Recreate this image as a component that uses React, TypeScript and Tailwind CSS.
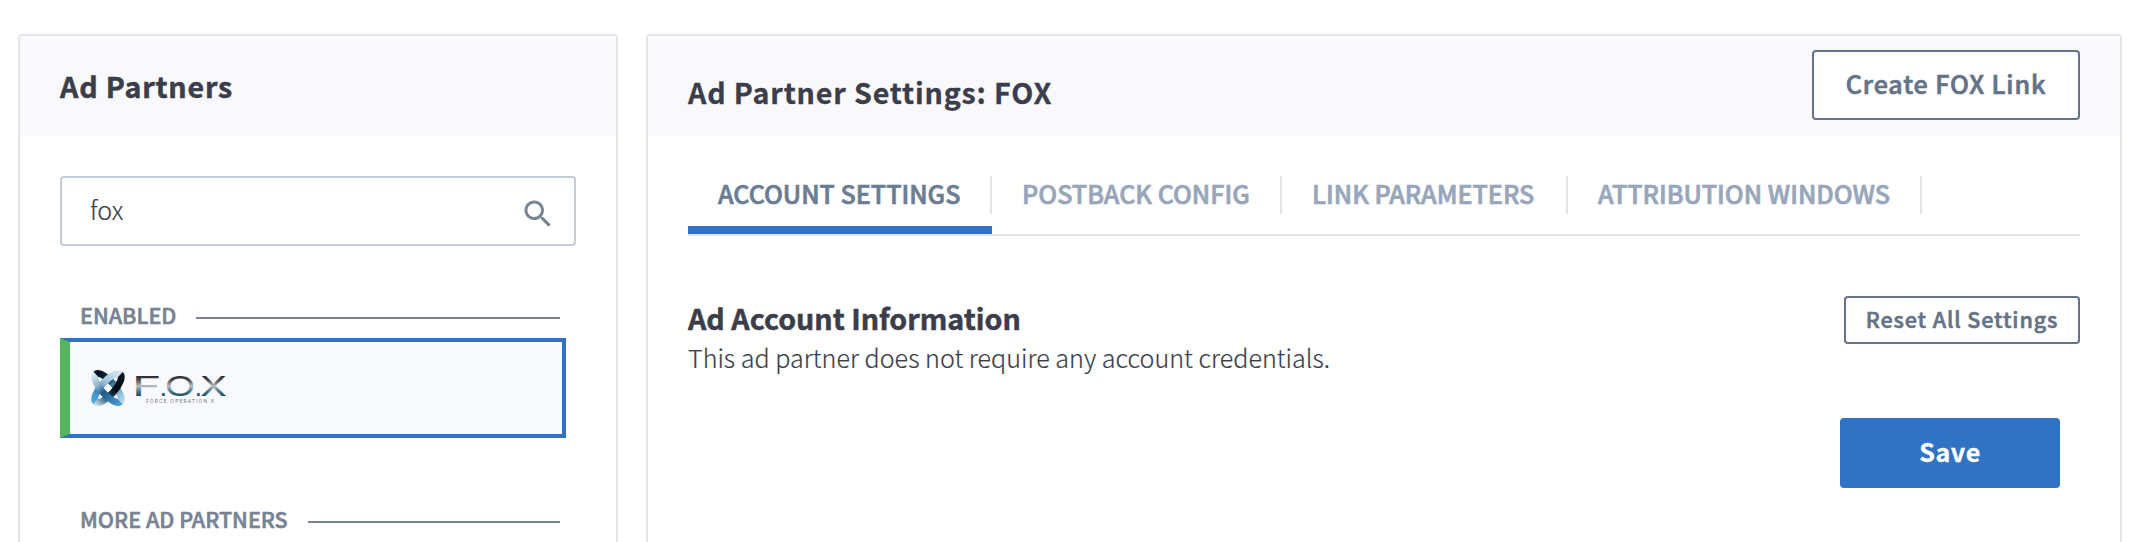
import type { ReactNode } from "react";

const tabs = [
  { label: "ACCOUNT SETTINGS", width: "w-[304px]", active: true },
  { label: "POSTBACK CONFIG", width: "w-[290px]", active: false },
  { label: "LINK PARAMETERS", width: "w-[286px]", active: false },
  { label: "ATTRIBUTION WINDOWS", width: "w-[354px]", active: false },
];

function SearchIcon() {
  return (
    <svg viewBox="0 0 24 24" className="mt-[18px] h-9 w-9 fill-[#778594]" aria-hidden="true">
      <path d="M15.5 14h-.79l-.28-.27C15.41 12.59 16 11.11 16 9.5 16 5.91 13.09 3 9.5 3S3 5.91 3 9.5 5.91 16 9.5 16c1.61 0 3.09-.59 4.23-1.57l.27.28v.79l5 4.99L20.49 19l-4.99-5zm-6 0C7.01 14 5 11.99 5 9.5S7.01 5 9.5 5 14 7.01 14 9.5 11.99 14 9.5 14z" />
    </svg>
  );
}

function FoxLogo() {
  return (
    <svg viewBox="0 0 140 40" className="h-10 w-[140px]" role="img" aria-label="F.O.X">
      <defs>
        <linearGradient id="frontA" gradientUnits="userSpaceOnUse" x1="-20" y1="0" x2="20" y2="0">
          <stop offset="0" stopColor="#dcebf6" />
          <stop offset=".3" stopColor="#86aecb" />
          <stop offset=".5" stopColor="#245a80" />
          <stop offset=".7" stopColor="#2f74a8" />
          <stop offset="1" stopColor="#4a9ad8" />
        </linearGradient>
        <linearGradient id="backA" gradientUnits="userSpaceOnUse" x1="-20" y1="0" x2="20" y2="0">
          <stop offset="0" stopColor="#03101c" />
          <stop offset=".3" stopColor="#0b2438" />
          <stop offset=".6" stopColor="#5b9cc4" />
          <stop offset="1" stopColor="#b9d9ee" />
        </linearGradient>
        <linearGradient id="frontB" gradientUnits="userSpaceOnUse" x1="-20" y1="0" x2="20" y2="0">
          <stop offset="0" stopColor="#55a9dc" />
          <stop offset=".3" stopColor="#3b86b8" />
          <stop offset=".6" stopColor="#a3c6e0" />
          <stop offset="1" stopColor="#d5e6f3" />
        </linearGradient>
        <linearGradient id="backB" gradientUnits="userSpaceOnUse" x1="-20" y1="0" x2="20" y2="0">
          <stop offset="0" stopColor="#c4dae8" />
          <stop offset=".3" stopColor="#235474" />
          <stop offset=".6" stopColor="#020a12" />
          <stop offset="1" stopColor="#0b1a28" />
        </linearGradient>
        <linearGradient id="letters" gradientUnits="userSpaceOnUse" x1="0" y1="8" x2="0" y2="28">
          <stop offset="0" stopColor="#2a2a30" />
          <stop offset=".2" stopColor="#4b4b50" />
          <stop offset=".5" stopColor="#b9c0c2" />
          <stop offset=".75" stopColor="#4f7b8c" />
          <stop offset="1" stopColor="#164a66" />
        </linearGradient>
      </defs>
      <g fill="none" strokeWidth="6.8" transform="translate(20 20)">
        <path d="M-18.5 0A18.5 6.7 0 0 1 18.5 0" stroke="url(#backA)" transform="rotate(48)" />
        <path d="M-18.5 0A18.5 6.7 0 0 0 18.5 0" stroke="url(#backB)" transform="rotate(-48)" />
        <path d="M-18.5 0A18.5 6.7 0 0 1 18.5 0" stroke="url(#frontB)" transform="rotate(-48)" />
        <path d="M-18.5 0A18.5 6.7 0 0 0 18.5 0" stroke="url(#frontA)" transform="rotate(48)" />
      </g>
      <g fill="url(#letters)" fontFamily="Inter, sans-serif" fontSize="27.5" fontWeight="400">
        <text x="43.8" y="28" textLength="30" lengthAdjust="spacingAndGlyphs">F</text>
        <text x="71.6" y="28" fontFamily="Liberation Sans, sans-serif">.</text>
        <text x="76.5" y="28" textLength="31" lengthAdjust="spacingAndGlyphs">O</text>
        <text x="106.4" y="28" fontFamily="Liberation Sans, sans-serif">.</text>
        <text x="112" y="28" textLength="27" lengthAdjust="spacingAndGlyphs">X</text>
      </g>
      <text x="58" y="34.5" fill="#6c747b" fontFamily="Inter, sans-serif" fontSize="4.8" textLength="68">
        FORCE OPERATION X
      </text>
    </svg>
  );
}

function SectionLabel({ children }: { children: ReactNode }) {
  return (
    <div className="flex h-[30px] items-start gap-5 pr-4 pl-5">
      <span className="text-[21.5px] leading-[30px] font-medium whitespace-nowrap text-[#778394] [-webkit-text-stroke:0.6px]">
        {children}
      </span>
      <span className="mt-[17px] h-0.5 flex-1 bg-[#778394]" />
    </div>
  );
}

export default function App() {
  return (
    <div className="flex h-[542px] w-[2144px] gap-7 overflow-hidden bg-white pt-[34px] pl-[18px] font-['Noto_Sans_CJK_SC','Noto_Sans',sans-serif] text-[#3b3e4a]">
      <section className="h-[560px] w-[600px] shrink-0 overflow-hidden rounded-[4px] border-2 border-[#e0e5ea]">
        <header className="h-[100px] bg-[#f9f9fc] px-10">
          <h2 className="text-[28.65px] leading-[99px] font-bold tracking-[0.8px] [-webkit-text-stroke:0.5px]">Ad Partners</h2>
        </header>
        <div className="px-10 pt-10">
          <div className="flex h-[70px] w-[516px] justify-between rounded-[4px] border-2 border-[#c3ccd7] pr-[18px] pl-7">
            <span className="text-[25.07px] leading-[62px] font-light [-webkit-text-stroke:0.2px]">fox</span>
            <SearchIcon />
          </div>
          <div className="flex w-[516px] flex-col pt-[54px]">
            <SectionLabel>ENABLED</SectionLabel>
            <div className="mt-2 flex h-[100px] w-[506px] border-4 border-l-[10px] border-[#3073c4] border-l-[#57b560] bg-[#f8f9fd] pt-[26px] pl-[18px]">
              <FoxLogo />
            </div>
            <div className="pt-[66px]">
              <SectionLabel>MORE AD PARTNERS</SectionLabel>
            </div>
          </div>
        </div>
      </section>

      <section className="h-[560px] w-[1476px] shrink-0 overflow-hidden rounded-[4px] border-2 border-[#e0e5ea]">
        <header className="flex h-[100px] items-start justify-between bg-[#f9f9fc] px-10">
          <h2 className="text-[28.65px] leading-[111px] font-bold tracking-[0.84px] [-webkit-text-stroke:0.3px]">Ad Partner Settings: FOX</h2>
          <button className="mt-3.5 flex h-[70px] w-[268px] justify-center rounded-[4px] border-2 border-[#647388] bg-white text-[25.07px] leading-[62px] font-medium tracking-[0.88px] text-[#647388] [-webkit-text-stroke:0.7px]">
            Create FOX Link
          </button>
        </header>
        <div className="px-10 pt-10">
          <nav className="flex h-[60px] border-b-2 border-[#e0e5ea]">
            {tabs.map((tab) => (
              <div key={tab.label} className={`flex flex-col justify-between ${tab.width}`}>
                <span
                  className={`h-[38px] border-r-2 border-[#e0e5ea] pl-[30px] text-[25.07px] leading-[34px] font-medium whitespace-nowrap [-webkit-text-stroke:0.7px] ${
                    tab.active ? "text-[#6b7d93]" : "text-[#97a6ba]"
                  }`}
                >
                  {tab.label}
                </span>
                {tab.active && <span className="h-2 bg-[#3073c4]" />}
              </div>
            ))}
          </nav>
          <div className="flex items-start justify-between pt-[60px]">
            <div>
              <h3 className="text-[28.65px] leading-[43px] font-bold [-webkit-text-stroke:0.5px]">Ad Account Information</h3>
              <p className="text-[25.07px] leading-9 font-light tracking-[0.02px] [-webkit-text-stroke:0.2px]">
                This ad partner does not require any account credentials.
              </p>
            </div>
            <button className="flex h-12 w-[236px] justify-center rounded-[4px] border-2 border-[#647388] text-[21.5px] leading-[41px] font-medium tracking-[0.88px] text-[#647388] [-webkit-text-stroke:0.6px]">
              Reset All Settings
            </button>
          </div>
          <div className="flex justify-end pt-[43px] pr-5">
            <button className="flex h-[70px] w-[220px] justify-center rounded-[4px] bg-[#3073c4] text-[25.07px] leading-[66px] font-bold tracking-[0.6px] text-white [-webkit-text-stroke:0.3px]">
              Save
            </button>
          </div>
        </div>
      </section>
    </div>
  );
}
